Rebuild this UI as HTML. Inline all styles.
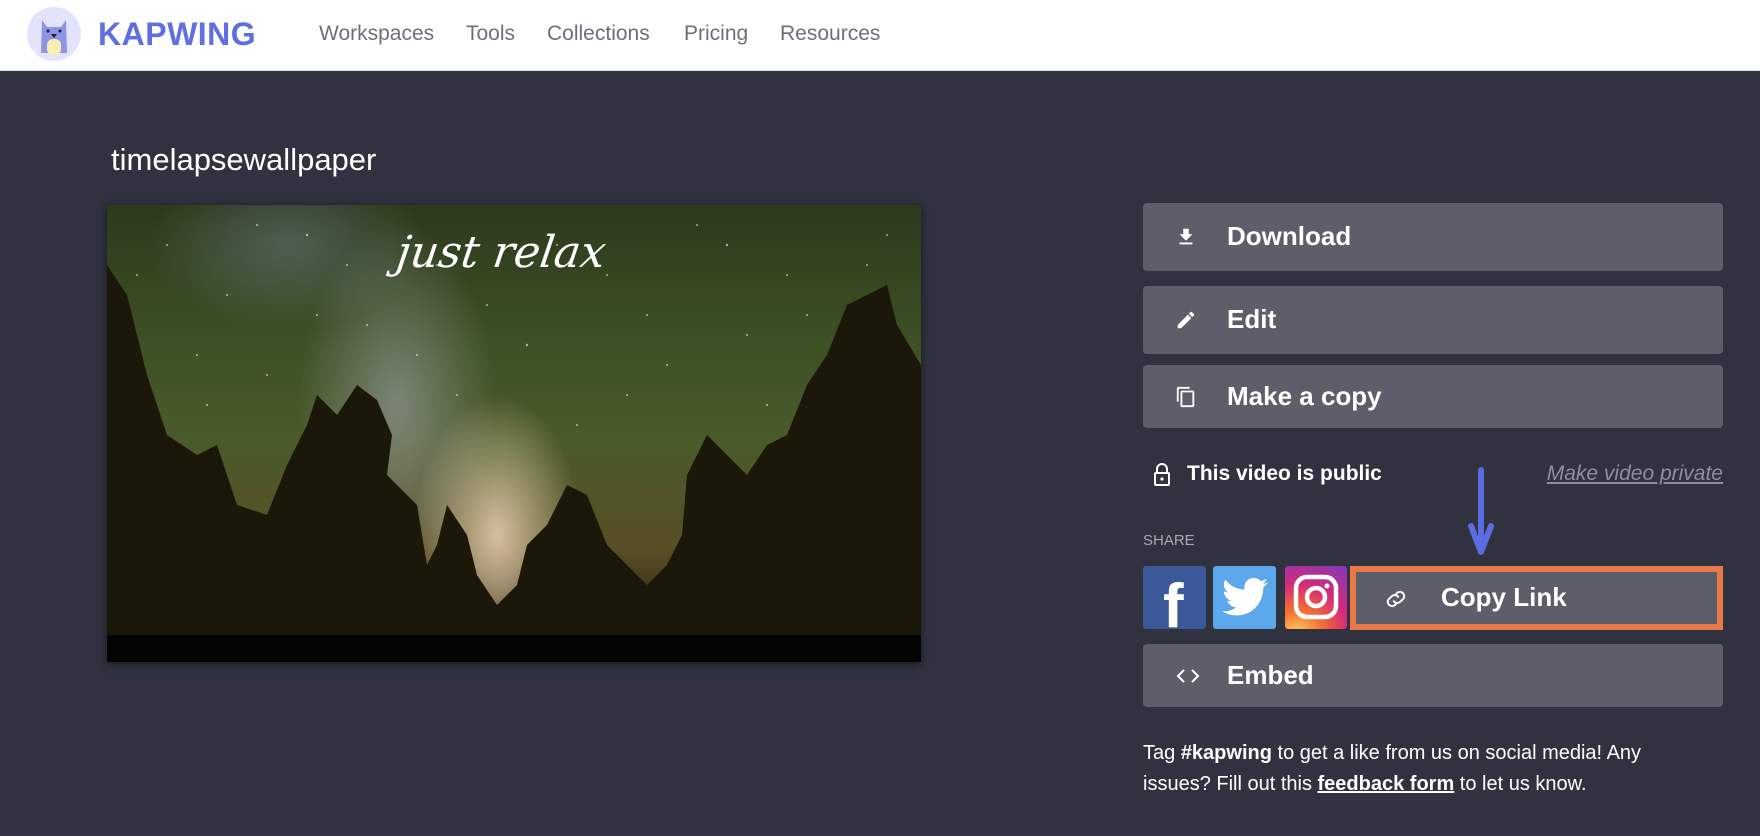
<!DOCTYPE html>
<html><head><meta charset="utf-8"><style>
*{margin:0;padding:0;box-sizing:border-box}
body{width:1760px;height:836px;overflow:hidden;background:#30323f;font-family:"Liberation Sans",sans-serif;position:relative}
.hdr{position:absolute;left:0;top:0;width:1760px;height:71px;background:#fff;border-bottom:1px solid #ddd}
.nav{position:absolute;top:22px;font-size:21px;color:#6e6f7a}
.title{position:absolute;left:111px;top:142px;color:#fff;font-size:31px}
.video{position:absolute;left:107px;top:205px;width:814px;height:457px;overflow:hidden;background:#1c1a0c;box-shadow:0 2px 8px rgba(0,0,0,.5)}
.btn{position:absolute;left:1143px;width:580px;background:#5c5e69;border-radius:4px;color:#fff;font-size:26px;font-weight:bold}
.btn span{position:absolute;left:84px}
.btn svg{position:absolute;left:32px}
.soc{position:absolute;top:566px;width:63px;height:63px;border-radius:3px;overflow:hidden}
</style></head><body>
<div class="hdr">
 <svg style="position:absolute;left:27px;top:7px" width="54" height="54" viewBox="0 0 54 54">
  <circle cx="27" cy="27" r="27" fill="#e3e4fb"/>
  <path d="M15 13 L20 20 L34 20 L39 13 L40 46 L14 46 Z" fill="#8d93e6"/>
  <rect x="20" y="32" width="14" height="16" rx="6" fill="#f8f0b0"/>
  <path d="M24 27 L30 27 L27 31 Z" fill="#222"/>
  <circle cx="21" cy="24" r="1.5" fill="#222"/><circle cx="33" cy="24" r="1.5" fill="#222"/>
 </svg>
 <div style="position:absolute;left:98px;top:16px;font-size:32px;font-weight:bold;color:#5e6fe0;letter-spacing:.5px">KAPWING</div>
 <div class="nav" style="left:319px">Workspaces</div>
 <div class="nav" style="left:466px">Tools</div>
 <div class="nav" style="left:547px">Collections</div>
 <div class="nav" style="left:684px">Pricing</div>
 <div class="nav" style="left:780px">Resources</div>
</div>
<div class="title">timelapsewallpaper</div>
<div class="video">
 <div style="position:absolute;inset:0 0 27px 0;background:
  radial-gradient(ellipse 120px 200px at 390px 330px,rgba(255,230,200,.75),rgba(255,220,180,0) 70%),
  radial-gradient(ellipse 140px 260px at 290px 200px,rgba(190,190,210,.45),rgba(0,0,0,0) 70%),
  radial-gradient(ellipse 200px 120px at 180px 40px,rgba(150,160,200,.3),rgba(0,0,0,0) 70%),
  linear-gradient(180deg,#2c3a1c 0%,#3f5226 35%,#4a5a2a 55%,#5a4e26 80%,#2a2210 100%)"></div>
 <svg style="position:absolute;left:0;top:0" width="814" height="430" viewBox="0 0 814 430">
  <g fill="#fff" opacity=".6">
   <circle cx="60" cy="40" r="1"/><circle cx="120" cy="90" r="1"/><circle cx="200" cy="30" r="1.2"/><circle cx="260" cy="120" r="1"/><circle cx="330" cy="60" r="1"/><circle cx="420" cy="140" r="1.2"/><circle cx="500" cy="70" r="1"/><circle cx="560" cy="160" r="1"/><circle cx="620" cy="40" r="1.2"/><circle cx="700" cy="110" r="1"/><circle cx="760" cy="60" r="1"/><circle cx="160" cy="170" r="1"/><circle cx="470" cy="220" r="1"/><circle cx="600" cy="240" r="1.2"/><circle cx="90" cy="150" r="1"/><circle cx="380" cy="100" r="1"/><circle cx="660" cy="200" r="1"/><circle cx="240" cy="60" r="1"/>
   <circle cx="30" cy="70" r="1"/><circle cx="150" cy="20" r="1"/><circle cx="310" cy="150" r="1"/><circle cx="540" cy="110" r="1"/><circle cx="590" cy="20" r="1"/><circle cx="680" cy="70" r="1"/><circle cx="740" cy="150" r="1"/><circle cx="450" cy="40" r="1"/><circle cx="210" cy="110" r="1"/><circle cx="520" cy="190" r="1"/><circle cx="640" cy="130" r="1"/><circle cx="100" cy="200" r="1"/><circle cx="350" cy="190" r="1"/><circle cx="780" cy="30" r="1"/>
  </g>
  <path fill="#1b1709" d="M0 60 L20 90 L40 170 L60 230 L90 250 L110 240 L130 300 L160 310 L180 260 L200 220 L210 190 L230 210 L250 180 L270 195 L285 230 L280 270 L310 300 L320 360 L330 340 L340 300 L360 330 L370 370 L390 400 L410 380 L420 340 L440 320 L460 280 L480 290 L500 340 L520 360 L540 380 L560 360 L575 330 L580 270 L600 230 L620 250 L640 270 L660 240 L680 230 L700 180 L720 150 L740 100 L760 90 L780 80 L790 120 L814 160 L814 430 L0 430 Z"/>
 </svg>
 <div style="position:absolute;left:290px;top:22px;color:#fff;font-family:'DejaVu Serif',serif;font-style:italic;font-size:44px;transform:skewX(-8deg)">just relax</div>
 <div style="position:absolute;left:0;right:0;bottom:0;height:27px;background:#030303"></div>
</div>

<div class="btn" style="top:203px;height:68px"><svg style="top:23px" width="22" height="22" viewBox="0 0 24 24"><path d="M5 20h14v-2H5zM19 9h-4V3H9v6H5l7 7z" fill="#fff"/></svg><span style="top:18px">Download</span></div>
<div class="btn" style="top:286px;height:68px"><svg style="top:23px" width="22" height="22" viewBox="0 0 24 24"><path d="M3 17.25V21h3.75L17.8 9.94l-3.75-3.75zM20.7 7.04a1 1 0 000-1.41l-2.34-2.34a1 1 0 00-1.41 0l-1.83 1.83 3.75 3.75z" fill="#fff"/></svg><span style="top:18px">Edit</span></div>
<div class="btn" style="top:365px;height:63px"><svg style="top:20px" width="22" height="24" viewBox="0 0 24 24"><path d="M16 1H4a2 2 0 00-2 2v14h2V3h12zm3 4H8a2 2 0 00-2 2v14a2 2 0 002 2h11a2 2 0 002-2V7a2 2 0 00-2-2zm0 16H8V7h11z" fill="#fff"/></svg><span style="top:16px">Make a copy</span></div>

<svg style="position:absolute;left:1153px;top:462px" width="18" height="26" viewBox="0 0 18 26"><path d="M4 11V7a5 5 0 0110 0v4" stroke="#fff" stroke-width="2" fill="none"/><rect x="2" y="11" width="14" height="12" rx="1" stroke="#fff" stroke-width="2" fill="none"/><circle cx="9" cy="17" r="1.6" fill="#fff"/></svg>
<div style="position:absolute;left:1187px;top:462px;color:#fff;font-size:21px;font-weight:bold">This video is public</div>
<div style="position:absolute;right:37px;top:462px;color:#8d8f9c;font-size:21px;font-style:italic;text-decoration:underline">Make video private</div>

<svg style="position:absolute;left:1467px;top:466px" width="28" height="92" viewBox="0 0 28 92"><path d="M14 4 V86 M4 60 L14 86 L24 60" stroke="#5b6be0" stroke-width="6" stroke-linecap="round" stroke-linejoin="round" fill="none"/></svg>
<div style="position:absolute;left:1143px;top:532px;color:#a6a8b2;font-size:15px">SHARE</div>

<div class="soc" style="left:1143px;background:#3b5998"><div style="position:absolute;left:20px;top:10px;color:#fff;font-size:62px;font-weight:bold;line-height:1">f</div></div>
<div class="soc" style="left:1213px;background:#5ca8ea"><svg style="position:absolute;left:9px;top:11px" width="46" height="40" viewBox="0 0 24 20"><path d="M24 2.4a9.8 9.8 0 01-2.8.8A4.9 4.9 0 0023.3.5a9.9 9.9 0 01-3.1 1.2A4.9 4.9 0 0011.8 6.2 14 14 0 011.7 1 4.9 4.9 0 003.2 7.6a4.9 4.9 0 01-2.2-.6 4.9 4.9 0 004 4.9 5 5 0 01-2.2.1 4.9 4.9 0 004.6 3.4A9.9 9.9 0 010 17.4a14 14 0 007.5 2.2c9.1 0 14-7.5 14-14v-.6A10 10 0 0024 2.4z" fill="#fff"/></svg></div>
<div class="soc" style="left:1285px;width:62px;background:radial-gradient(circle at 20% 110%,#fdd56a 0%,#f46f30 30%,#d42a7a 60%,#7c3bbd 100%)"><svg style="position:absolute;left:7px;top:7px" width="48" height="48" viewBox="0 0 48 48"><rect x="4" y="4" width="40" height="40" rx="11" stroke="#fff" stroke-width="4.5" fill="none"/><circle cx="24" cy="24" r="9" stroke="#fff" stroke-width="4.5" fill="none"/><circle cx="35" cy="13" r="2.5" fill="#fff"/></svg></div>

<div style="position:absolute;left:1350px;top:566px;width:373px;height:64px;border:6px solid #ea7848;background:#5c5e69"></div>
<svg style="position:absolute;left:1383px;top:586px" width="26" height="26" viewBox="0 0 24 24"><path d="M10 14a4 4 0 006 .5l3-3a4 4 0 00-5.5-5.5l-1.5 1.5M14 10a4 4 0 00-6-.5l-3 3a4 4 0 005.5 5.5l1.5-1.5" stroke="#fff" stroke-width="1.8" fill="none" stroke-linecap="round"/></svg>
<div style="position:absolute;left:1441px;top:582px;color:#fff;font-size:26px;font-weight:bold">Copy Link</div>

<div class="btn" style="top:644px;height:63px"><svg style="top:20px" width="26" height="24" viewBox="0 0 26 24"><path d="M9 6 L3 12 L9 18 M17 6 L23 12 L17 18" stroke="#fff" stroke-width="2" fill="none"/></svg><span style="top:16px">Embed</span></div>

<div style="position:absolute;left:1143px;top:738px;width:570px;color:#fff;font-size:20px;line-height:31px">Tag <b>#kapwing</b> to get a like from us on social media! Any issues? Fill out this <b style="text-decoration:underline">feedback form</b> to let us know.</div>
</body></html>
